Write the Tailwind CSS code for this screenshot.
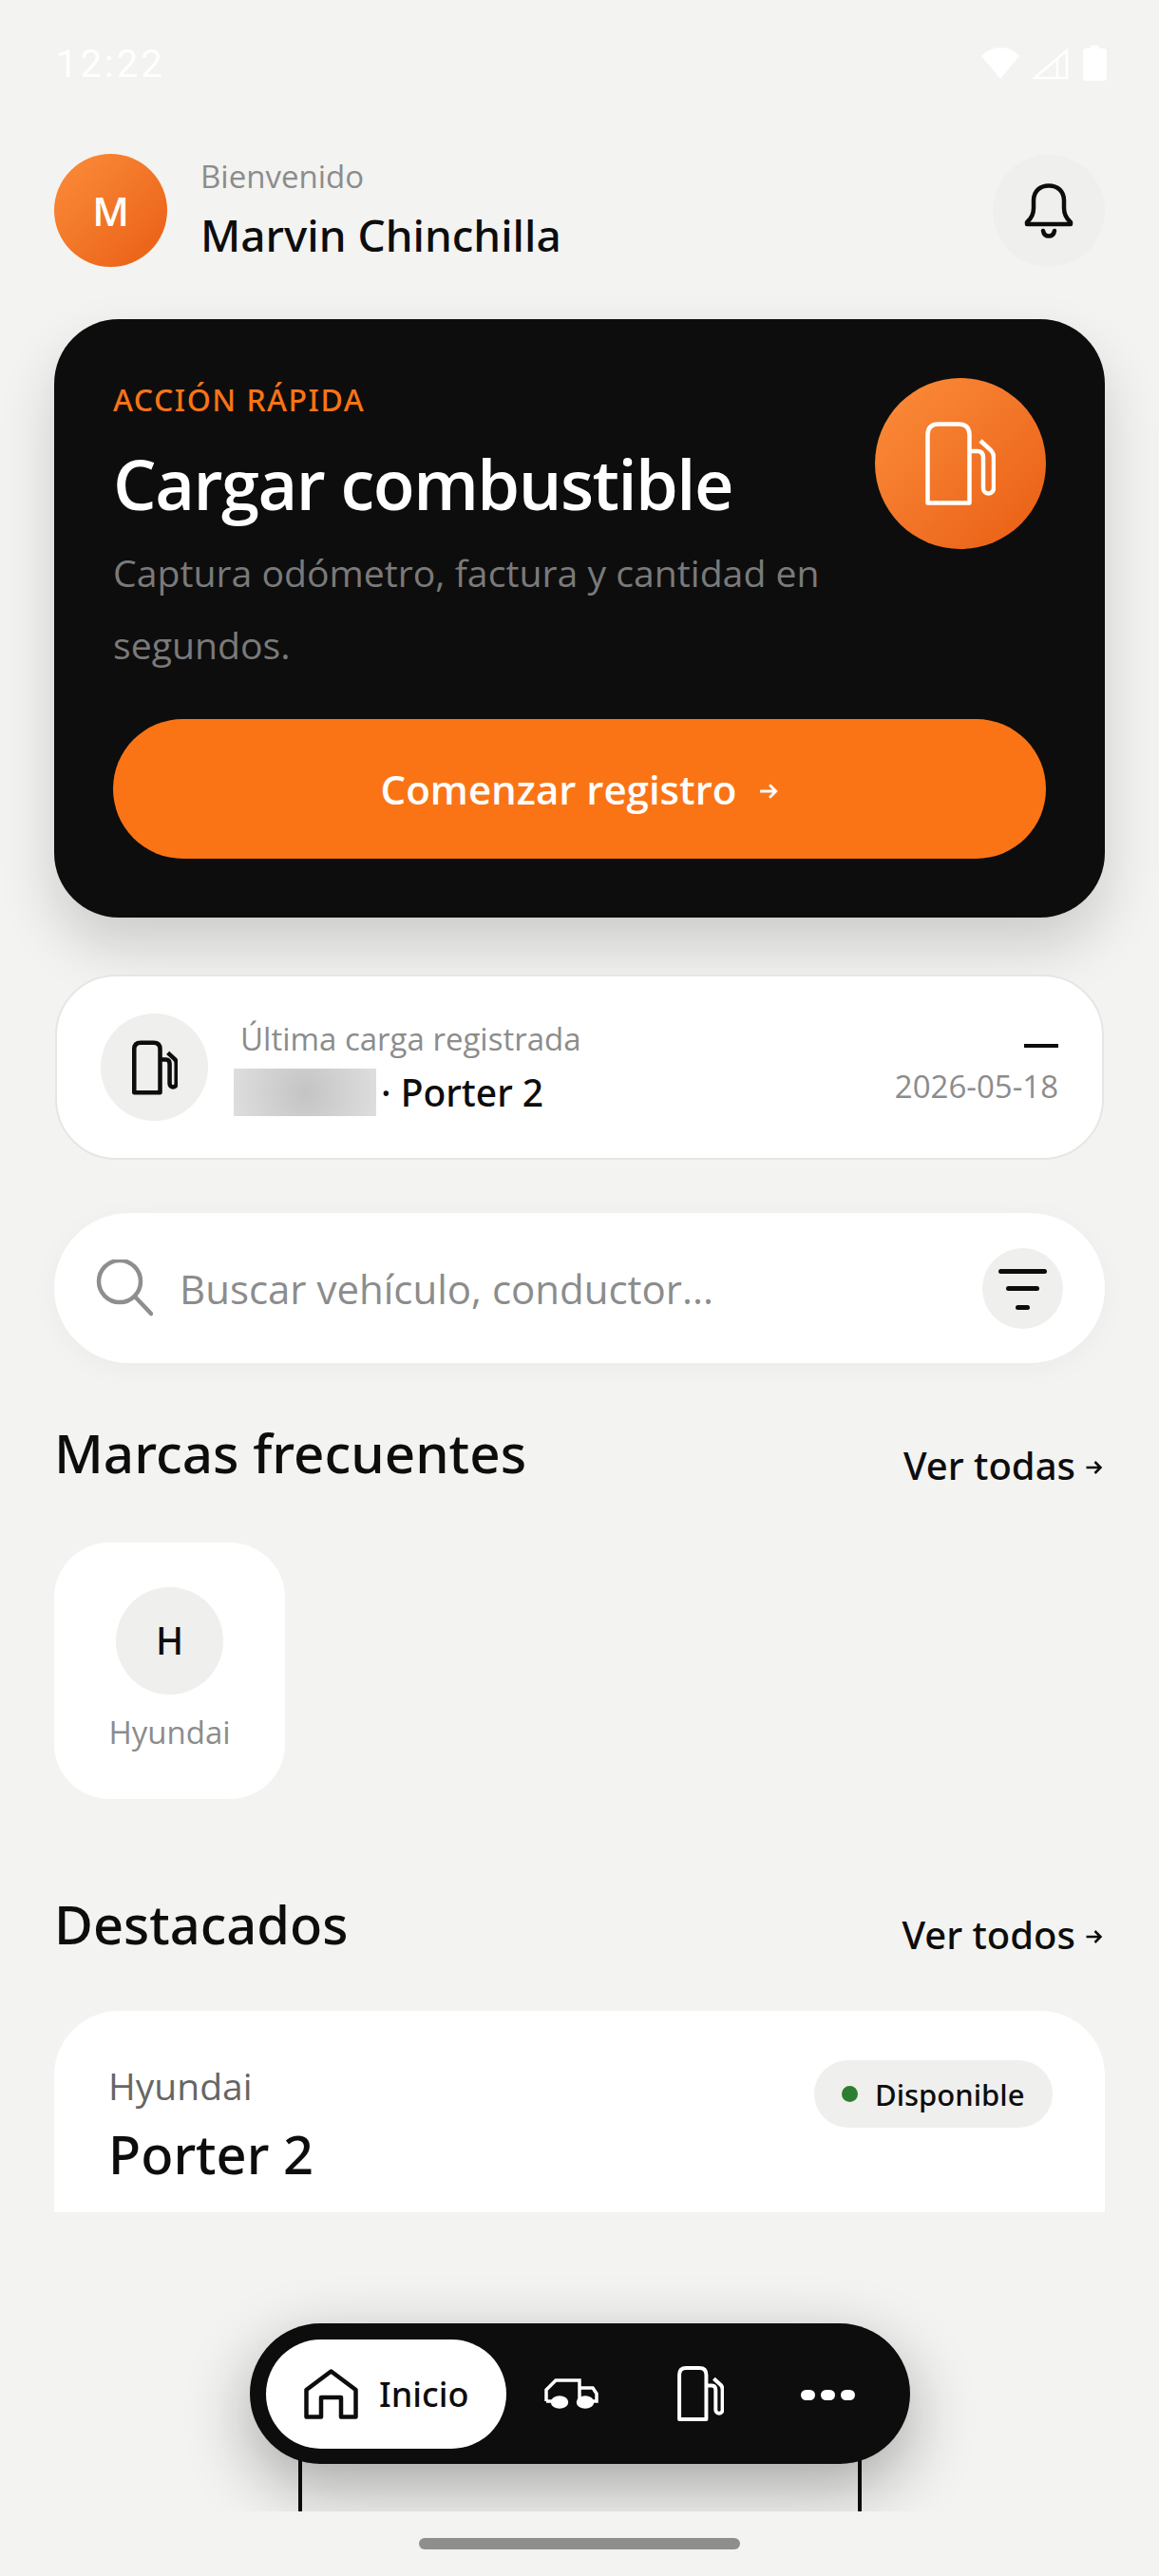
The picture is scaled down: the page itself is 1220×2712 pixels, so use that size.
<!DOCTYPE html>
<html lang="es">
<head>
  <meta charset="UTF-8">
  <meta name="viewport" content="width=device-width, initial-scale=1.0">
  <title>Inicio</title>
  <script src="https://cdn.jsdelivr.net/npm/@tailwindcss/browser@4"></script>
</head>
<body class="bg-[#f3f3f1] font-['Open_Sans',sans-serif]">
  <div class="relative w-[1220px] h-[2712px] overflow-hidden bg-[#f3f3f1]">

    <!-- Scroll area -->
    <div class="h-[2329px] overflow-hidden">
      <!-- Status bar -->
      <div class="h-[162px] pl-[59px] pr-[55px] pt-[44px] flex justify-between items-start text-white">
        <span class="text-[40px] leading-[48px] tracking-[3px] font-['Roboto',sans-serif]">12:22</span>
        <div class="flex items-start pt-[6px]">
          <svg class="w-[40px] h-[33px]" viewBox="0 0 40 33" fill="#fff"><path d="M0 9C11 -3 29 -3 40 9L20 33Z"/></svg>
          <svg class="ml-[14px] w-[38px] h-[34px]" viewBox="0 0 38 34" fill="none" stroke="#fff" stroke-width="2.500"><path d="M2 32L36 3V32ZM26 12V32"/></svg>
          <svg class="ml-[15px] w-[25px] h-[37px] -mt-[2px]" viewBox="0 0 25 37" fill="#fff"><path d="M8 0H17V3H22Q25 3 25 6V34Q25 37 22 37H3Q0 37 0 34V6Q0 3 3 3H8Z"/></svg>
        </div>
      </div>

      <div class="px-[57px]">
        <!-- Header -->
        <div class="flex items-center justify-between h-[119px]">
          <div class="flex items-center gap-[35px]">
            <div class="w-[119px] h-[119px] rounded-full bg-gradient-to-br from-[#fb8d3a] to-[#e95d10] flex items-center justify-center text-white text-[42px] font-semibold">M</div>
            <div>
              <p class="text-[33px] leading-[44px] text-[#8c8c8c] -mt-[3px]">Bienvenido</p>
              <p class="text-[46px] leading-[60px] mt-[9px] text-[#0d0d0d] font-['Noto_Sans',sans-serif] font-medium">Marvin Chinchilla</p>
            </div>
          </div>
          <div class="w-[118px] h-[118px] rounded-full bg-[#efefed] flex items-center justify-center">
            <svg class="w-[52px] h-[58px]" viewBox="0 0 52 58" fill="none" stroke="#0d0d0d" stroke-width="4.500" stroke-linejoin="round" stroke-linecap="round"><path d="M3 41Q10 35 10 26V18C10 8 17 2.500 26 2.500S42 8 42 18V26Q42 35 49 41V43H3Z"/><path d="M20 50Q21 55.500 26 55.500T32 50"/></svg>
          </div>
        </div>

        <!-- Quick action -->
        <div class="mt-[55px] h-[630px] rounded-[68px] bg-[#0d0d0d] px-[62px] pt-[62px] shadow-[0_30px_60px_rgba(0,0,0,0.16)]">
          <div class="flex justify-between items-start">
            <div>
              <p class="text-[32px] leading-[40px] tracking-[1.500px] text-[#f97316] font-['Noto_Sans',sans-serif] font-medium mt-[3px]">ACCIÓN RÁPIDA</p>
              <h1 class="text-[72px] leading-[98px] mt-[19px] text-white font-semibold tracking-[-1.500px]">Cargar combustible</h1>
            </div>
            <div class="w-[180px] h-[180px] rounded-full bg-gradient-to-br from-[#fb8d3a] to-[#e95d10] flex items-center justify-center">
              <svg class="w-[74px] h-[88px]" viewBox="0 0 74 88" fill="none" stroke="#fff" stroke-width="4.500" stroke-linejoin="round"><path d="M2.500 85.500V14Q2.500 2.500 14 2.500H35Q46.500 2.500 46.500 14V85.500Z"/><path d="M46.500 31H55Q61 31 61 38V70A5.500 5.500 0 0 0 72 70V37Q72 33 69 30L58 20"/></svg>
            </div>
          </div>
          <p class="-mt-[13px] w-[800px] text-[39.200px] leading-[76px] text-[#7a7a7a]">Captura odómetro, factura y cantidad en segundos.</p>
          <button class="mt-[40px] w-full h-[147px] rounded-full bg-[#fa7416] text-white text-[42px] font-semibold flex items-center justify-center gap-[24px]">
            Comenzar registro
            <svg class="w-[20px] h-[20px] mt-[4px]" viewBox="0 0 18 18" fill="none" stroke="#fff" stroke-width="2.500"><path d="M1 9H16M10 3L16 9L10 15"/></svg>
          </button>
        </div>

        <!-- Last fuel load -->
        <div class="mt-[60px] mx-[1px] h-[195px] rounded-[64px] bg-white border-2 border-[#e6e6e4] pl-[46px] pr-[46px] flex items-center">
          <div class="w-[113px] h-[113px] rounded-full bg-[#efefed] flex items-center justify-center">
            <svg class="w-[48px] h-[58px]" viewBox="0 0 74 88" fill="none" stroke="#0d0d0d" stroke-width="7" stroke-linejoin="round"><path d="M3.500 84.500V14Q3.500 3.500 14 3.500H35Q45.500 3.500 45.500 14V84.500Z"/><path d="M45.500 31H55Q61 31 61 38V70A5.500 5.500 0 0 0 72 70V37Q72 33 69 30L58 20"/></svg>
          </div>
          <div class="ml-[27px] flex-1">
            <p class="ml-[7px] text-[33px] leading-[44px] text-[#8c8c8c]">Última carga registrada</p>
            <div class="mt-[9px] flex items-center h-[50px]">
              <div class="w-[150px] h-[50px] bg-[radial-gradient(circle,#c4c4c4,#dedede)]"></div>
              <p class="ml-[5px] text-[39px] leading-[50px] text-[#0d0d0d] font-['Noto_Sans',sans-serif] font-medium">· Porter 2</p>
            </div>
          </div>
          <div class="flex flex-col items-end">
            <div class="w-[36px] h-[4px] bg-[#0d0d0d] mt-[17px]"></div>
            <p class="mt-[19px] text-[33px] leading-[44px] text-[#8c8c8c]">2026-05-18</p>
          </div>
        </div>

        <!-- Search -->
        <div class="mt-[56px] h-[158px] rounded-full bg-white pl-[44px] pr-[44px] flex items-center shadow-[0_6px_30px_rgba(0,0,0,0.035)]">
          <svg class="w-[60px] h-[60px]" viewBox="0 0 60 60" fill="none" stroke="#8e8e8e" stroke-width="4.500" stroke-linecap="round"><circle cx="25" cy="23" r="22"/><path d="M41 39L58 57"/></svg>
          <span class="ml-[28px] flex-1 text-[42px] text-[#8c8c8c]">Buscar vehículo, conductor...</span>
          <div class="w-[85px] h-[85px] rounded-full bg-[#efefed] flex flex-col items-center pt-[22px]">
            <div class="w-[51px] h-[5px] rounded-full bg-[#0d0d0d]"></div>
            <div class="w-[35px] h-[5px] rounded-full bg-[#0d0d0d] mt-[13px]"></div>
            <div class="w-[15px] h-[5px] rounded-full bg-[#0d0d0d] mt-[15px]"></div>
          </div>
        </div>

        <!-- Brands -->
        <div class="mt-[65px] flex justify-between items-end h-[60px]">
          <h2 class="text-[56.500px] leading-[60px] text-[#0d0d0d] font-['Noto_Sans',sans-serif] font-medium">Marcas frecuentes</h2>
          <a class="text-[40px] leading-[44px] text-[#0d0d0d] font-['Noto_Sans',sans-serif] font-medium flex items-center gap-[10px] mr-[2px] -mb-[5px]">Ver todas
            <svg class="w-[19px] h-[18px] mt-[4px]" viewBox="0 0 18 18" fill="none" stroke="#0d0d0d" stroke-width="2.500"><path d="M1 9H16M10 3L16 9L10 15"/></svg>
          </a>
        </div>
        <div class="mt-[64px] w-[243px] h-[270px] rounded-[58px] bg-white flex flex-col items-center pt-[47px]">
          <div class="w-[113px] h-[113px] rounded-full bg-[#efefed] flex items-center justify-center text-[39px] font-['Noto_Sans',sans-serif] font-medium text-[#0d0d0d]">H</div>
          <p class="mt-[18px] text-[33px] leading-[44px] text-[#8c8c8c]">Hyundai</p>
        </div>

        <!-- Featured -->
        <div class="mt-[101px] flex justify-between items-end h-[60px]">
          <h2 class="text-[56px] leading-[60px] text-[#0d0d0d] font-['Noto_Sans',sans-serif] font-medium">Destacados</h2>
          <a class="text-[40px] leading-[44px] text-[#0d0d0d] font-['Noto_Sans',sans-serif] font-medium flex items-center gap-[10px] mr-[2px] -mb-[4px]">Ver todos
            <svg class="w-[19px] h-[18px] mt-[4px]" viewBox="0 0 18 18" fill="none" stroke="#0d0d0d" stroke-width="2.500"><path d="M1 9H16M10 3L16 9L10 15"/></svg>
          </a>
        </div>
        <div class="mt-[62px] h-[400px] rounded-[68px] bg-white pl-[57px] pr-[55px] pt-[52px] flex justify-between items-start">
          <div>
            <p class="text-[39px] leading-[50px] text-[#666] mt-[2px]">Hyundai</p>
            <p class="text-[56px] leading-[72px] mt-[10px] text-[#0d0d0d] font-['Noto_Sans',sans-serif] font-medium">Porter 2</p>
          </div>
          <div class="h-[71px] w-[251px] rounded-full bg-[#efefed] flex items-center pl-[29px] gap-[18px]">
            <span class="w-[17px] h-[17px] rounded-full bg-[#2e7d32]"></span>
            <span class="text-[31px] leading-[44px] text-[#0d0d0d] font-['Noto_Sans',sans-serif] font-medium">Disponible</span>
          </div>
        </div>
      </div>
    </div>

    <!-- Screen behind nav -->
    <div class="absolute left-[314px] top-[2560px] w-[593px] h-[84px] border-x-[4px] border-[#0d0d0d] bg-transparent"></div>

    <!-- Bottom nav -->
    <nav class="absolute left-[263px] top-[2446px] w-[695px] h-[148px] rounded-full bg-[#0d0d0d] pl-[17px] flex items-center shadow-[0_24px_70px_rgba(0,0,0,0.32)]">
      <div class="w-[253px] h-[115px] rounded-full bg-white flex items-center pl-[40px] gap-[22px]">
        <svg class="w-[57px] h-[53px]" viewBox="0 0 57 53" fill="none" stroke="#0d0d0d" stroke-width="4.500" stroke-linejoin="round"><path d="M28.500 2.500L54.500 22V50.500H39V30H18V50.500H2.500V22Z"/></svg>
        <span class="text-[36px] leading-[44px] mt-[2px] text-[#0d0d0d] font-['Noto_Sans',sans-serif] font-medium">Inicio</span>
      </div>
      <svg class="ml-[40px] w-[57px] h-[32px]" viewBox="0 0 57 32" fill="none" stroke="#fff" stroke-width="3.500"><path d="M2 24V12L12 2H37V24M37 10H51L55 16V24H50M2 24H8"/><ellipse cx="16" cy="25" rx="7.500" ry="5" fill="#fff"/><ellipse cx="43" cy="25" rx="7.500" ry="5" fill="#fff"/></svg>
      <svg class="ml-[83px] w-[49px] h-[58px]" viewBox="0 0 74 88" fill="none" stroke="#fff" stroke-width="6" stroke-linejoin="round"><path d="M3 85V14Q3 3 14 3H35Q46 3 46 14V85Z"/><path d="M46 31H55Q61 31 61 38V70A5.500 5.500 0 0 0 72 70V37Q72 33 69 30L58 20"/></svg>
      <div class="ml-[81px] flex gap-[6px] mt-[2px]">
        <span class="w-[15px] h-[11px] rounded-full bg-white"></span>
        <span class="w-[15px] h-[11px] rounded-full bg-white"></span>
        <span class="w-[15px] h-[11px] rounded-full bg-white"></span>
      </div>
    </nav>

    <!-- System navigation bar -->
    <div class="absolute left-0 top-[2644px] w-full h-[68px] bg-[#f3f3f1] flex justify-center pt-[28px]">
      <div class="w-[338px] h-[12px] rounded-full bg-[#8e8e8e]"></div>
    </div>
  </div>
</body>
</html>
